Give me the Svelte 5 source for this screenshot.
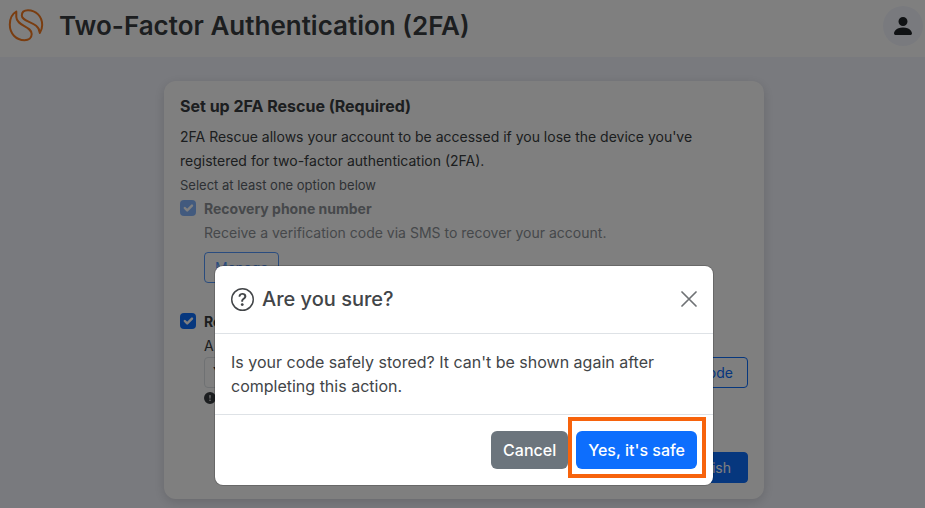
<script>
  let phone = $state(true);
  let code = $state(true);
  let codeValue = $state('Your code');
</script>

<div class="page">
  <header class="topbar">
    <svg class="logo" viewBox="0 0 36 34" aria-label="Logo" role="img">
      <g fill="none" stroke="#f47b20" stroke-width="2" stroke-linejoin="round">
        <path d="M8.300 2.500C4 5 1.800 10 1.800 15.500C1.800 24.500 8 31.200 16.500 31.200C21 31.200 23.700 28.500 23.700 25C23.700 17 8.500 17 8.300 8Z" />
        <path d="M31.800 24C33.600 21 34.200 18.500 34.200 16C34.200 7.500 28 1.200 20 1.200C16 1.200 13.800 3 13.800 6.500C13.800 13.500 31.300 12.500 31.800 24Z" />
      </g>
    </svg>
    <h1>Two-Factor Authentication (2FA)</h1>
    <button class="avatar" aria-label="Account">
      <svg viewBox="0 0 16 16" width="24" height="24" fill="currentColor">
        <path d="M3 14s-1 0-1-1 1-4 6-4 6 3 6 4-1 1-1 1zm5-6a3 3 0 1 0 0-6 3 3 0 0 0 0 6" />
      </svg>
    </button>
  </header>

  <main>
    <section class="card">
      <h2>Set up 2FA Rescue (Required)</h2>
      <p>2FA Rescue allows your account to be accessed if you lose the device you've registered for two-factor authentication (2FA).</p>
      <p class="hint">Select at least one option below</p>

      <div class="option">
        <input id="phone" type="checkbox" bind:checked={phone} disabled />
        <div class="details">
          <label class="faded" for="phone">Recovery phone number</label>
          <p class="faded">Receive a verification code via SMS to recover your account.</p>
          <button class="btn outline faded-button" disabled>Manage</button>
        </div>
      </div>

      <div class="option second">
        <input id="code" type="checkbox" bind:checked={code} />
        <div class="details">
          <label for="code">Recovery code</label>
          <p class="tight">A code</p>
          <div class="code-row">
            <input type="text" aria-label="Recovery code" bind:value={codeValue} />
            <button class="btn outline">Copy code</button>
          </div>
          <div class="warning">
            <svg viewBox="0 0 16 16" width="12" height="12" fill="currentColor" aria-hidden="true">
              <path d="M16 8A8 8 0 1 1 0 8a8 8 0 0 1 16 0M8 4a.905.905 0 0 0-.9.995l.35 3.507a.552.552 0 0 0 1.100 0l.35-3.507A.905.905 0 0 0 8 4m.002 6a1 1 0 1 0 0 2 1 1 0 0 0 0-2" />
            </svg>
          </div>
        </div>
      </div>
      <div class="actions"><button class="btn solid">Finish</button></div>
    </section>
  </main>

  <div class="backdrop">
    <div class="modal" role="dialog" aria-modal="true" aria-labelledby="title">
      <div class="modal-header">
        <svg viewBox="0 0 16 16" width="23" height="23" fill="currentColor" aria-hidden="true">
          <path d="M8 15A7 7 0 1 1 8 1a7 7 0 0 1 0 14m0 1A8 8 0 1 0 8 0a8 8 0 0 0 0 16" />
          <path d="M5.255 5.786a.237.237 0 0 0 .241.247h.825c.138 0 .248-.113.266-.25.090-.656.540-1.134 1.342-1.134.686 0 1.314.343 1.314 1.168 0 .635-.374.927-.965 1.371-.673.489-1.206 1.060-1.168 1.987l.003.217a.25.25 0 0 0 .25.246h.811a.25.25 0 0 0 .25-.25v-.105c0-.718.273-.927 1.010-1.486.609-.463 1.244-.977 1.244-2.056 0-1.511-1.276-2.241-2.673-2.241-1.267 0-2.655.590-2.750 2.286m1.557 5.763c0 .533.425.927 1.010.927.609 0 1.028-.394 1.028-.927 0-.552-.420-.940-1.029-.940-.584 0-1.009.388-1.009.940" />
        </svg>
        <h3 id="title">Are you sure?</h3>
        <button class="close" aria-label="Close">
          <svg viewBox="0 0 16 16" width="16" height="16" stroke="currentColor" stroke-width="1.700" stroke-linecap="round"><path d="M1 1 15 15M15 1 1 15" /></svg>
        </button>
      </div>
      <div class="modal-body">Is your code safely stored? It can't be shown again after completing this action.</div>
      <div class="modal-footer">
        <button class="action cancel">Cancel</button>
        <div class="marked"><button class="action confirm">Yes, it's safe</button></div>
      </div>
    </div>
  </div>
</div>

<style>
  :global(body) { margin: 0; background: #f3f5fd; }
  .page, .page * { box-sizing: border-box; }
  .page {
    position: relative;
    height: 100vh;
    overflow: hidden;
    background: #f3f5fd;
    color: #393c40;
    font-family: Inter, "Liberation Sans", sans-serif;
    font-size: 14px;
    line-height: 24px;
  }
  h1, h2, h3, p { margin: 0; }
  button, input { font: inherit; }
  .topbar {
    display: flex;
    align-items: center;
    gap: 15px;
    height: 57px;
    padding: 0 2px 6px 8px;
    background: #fff;
  }
  .logo { width: 36px; height: 34px; }
  h1 { flex: 1; font-size: 26px; line-height: 32px; font-weight: 600; }
  .avatar {
    display: grid;
    place-items: center;
    width: 40px;
    height: 40px;
    padding: 0;
    border: 0;
    border-radius: 50%;
    background: #f3f5fd;
    color: #212529;
  }
  main { display: flex; justify-content: center; padding: 24px 0 8px 3px; }
  .card {
    width: 100%;
    max-width: 600px;
    padding: 13px 16px 16px;
    border-radius: 12px;
    background: #fff;
    box-shadow: 0 3px 12px rgba(0, 0, 0, 0.15);
  }
  h2 { margin-bottom: 7px; font-size: 16px; line-height: 24px; font-weight: 700; }
  .hint { font-size: 13px; color: #5c636a; }
  .option { display: flex; gap: 8px; }
  .second { margin-top: 27px; }
  .details { flex: 1; }
  label { display: block; font-weight: 700; }
  .faded { color: #8c9196; }
  .faded-button { margin-top: 7px; }
  input[type="checkbox"] {
    appearance: none;
    width: 16px;
    height: 16px;
    margin: 3px 0 0;
    border-radius: 4px;
    background: #0d6efd url("data:image/svg+xml,%3Csvg xmlns='http://www.w3.org/2000/svg' viewBox='0 0 20 20'%3E%3Cpath fill='none' stroke='%23fff' stroke-linecap='round' stroke-linejoin='round' stroke-width='3' d='m6 10 3 3 6-6'/%3E%3C/svg%3E") center / contain;
  }
  input[type="checkbox"]:disabled { opacity: 0.5; }
  .tight { line-height: 23px; }
  .btn {
    height: 31px;
    padding: 0 10px;
    border: 1px solid #0d6efd;
    border-radius: 4px;
    font-size: 14px;
    line-height: 21px;
  }
  .btn:disabled { opacity: 0.7; }
  .outline { background: transparent; color: #0d6efd; }
  .solid { padding: 0 16px; background: #0d6efd; color: #fff; }
  .code-row { display: flex; gap: 8px; }
  .code-row input {
    flex: 1;
    min-width: 0;
    height: 31px;
    padding: 4px 8px;
    border: 1px solid #dee2e6;
    border-radius: 4px;
    background: #fff;
    color: #212529;
  }
  .code-row .btn { padding: 0 14px; }
  .warning { display: flex; align-items: center; height: 20px; }
  .actions { display: flex; justify-content: flex-end; margin-top: 44px; }
  .backdrop {
    position: absolute;
    inset: 0;
    padding: 266px 0 0 3px;
    background: rgba(0, 0, 0, 0.5);
  }
  .modal {
    width: 100%;
    max-width: 498px;
    margin: 0 auto;
    border-radius: 8px;
    background: #fff;
    color: #424548;
    font-size: 16px;
    box-shadow: 0 0 0 1px rgba(0, 0, 0, 0.18);
  }
  .modal-header {
    display: flex;
    align-items: center;
    gap: 8px;
    padding: 15px 16px 16px;
    border-bottom: 1px solid #dee2e6;
  }
  h3 { flex: 1; font-size: 20px; line-height: 36px; font-weight: 500; }
  .close { display: flex; padding: 0; border: 0; background: none; color: #6f7275; }
  .modal-body { padding: 16px; }
  .modal-footer {
    display: flex;
    justify-content: flex-end;
    gap: 8px;
    padding: 16px;
    border-top: 1px solid #dee2e6;
  }
  .action {
    height: 38px;
    padding: 0 12px;
    border: 0;
    border-radius: 6px;
    color: #fff;
    font-weight: 500;
  }
  .cancel { background: #6c757d; }
  .confirm { background: #0d6efd; }
  .marked { position: relative; }
  .marked::after {
    content: "";
    position: absolute;
    inset: -14px -9px -9px -8px;
    border: 4px solid #f7630c;
    pointer-events: none;
  }
</style>
